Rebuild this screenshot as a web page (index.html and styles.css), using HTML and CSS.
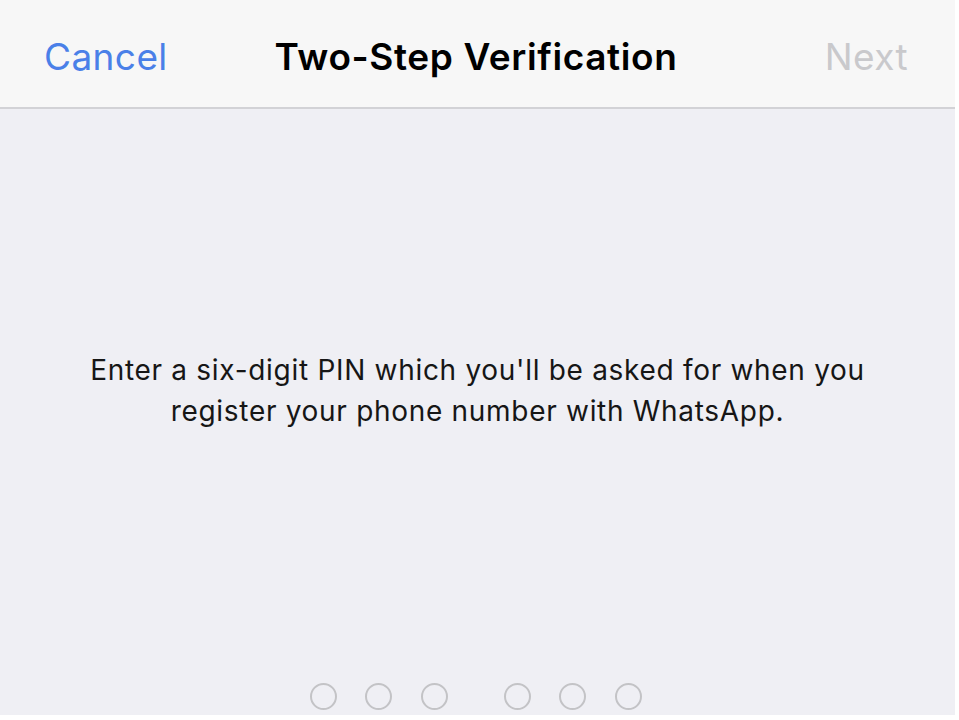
FILE: index.html
```html
<!DOCTYPE html>
<html lang="en">
<head>
  <meta charset="UTF-8" />
  <meta name="viewport" content="width=device-width, initial-scale=1.0" />
  <title>Two-Step Verification</title>
  <link rel="stylesheet" href="styles.css">
</head>
<body>
  <div class="screen">
    <header class="nav-bar">
      <button class="nav-btn cancel">Cancel</button>
      <h1 class="nav-title">Two-Step Verification</h1>
      <button class="nav-btn next" disabled>Next</button>
    </header>

    <main class="content">
      <p class="hint">
        Enter a six-digit PIN which you'll be asked for when you<br>
        register your phone number with WhatsApp.
      </p>

      <div class="pin-row">
        <div class="pin-group">
          <span class="pin-dot"></span>
          <span class="pin-dot"></span>
          <span class="pin-dot"></span>
        </div>
        <div class="pin-group">
          <span class="pin-dot"></span>
          <span class="pin-dot"></span>
          <span class="pin-dot"></span>
        </div>
      </div>
    </main>
  </div>
</body>
</html>
```

FILE: styles.css
```css
:root {
  --nav-bg: #f7f7f7;
  --page-bg: #efeff4;
  --hairline: #d2d2d6;
  --ios-blue: #4a80e8;
  --disabled: #c9c9cc;
  --dot: #c3c3c6;
}

* {
  box-sizing: border-box;
  margin: 0;
  padding: 0;
}

html, body {
  background: #ffffff;
  font-family: 'Inter', 'Liberation Sans', sans-serif;
  color: #000;
  width: 100%;
  height: 100%;
  overflow: hidden;
}

.screen {
  width: 955px;
  height: 715px;
  background: var(--page-bg);
  display: flex;
  flex-direction: column;
}

.nav-bar {
  height: 109px;
  background: var(--nav-bg);
  border-bottom: 2px solid var(--hairline);
  display: grid;
  grid-template-columns: 1fr auto 1fr;
  align-items: center;
  padding: 0 47px 0 44px;
}

.nav-btn {
  background: none;
  border: none;
  font-family: inherit;
  font-size: 37px;
  font-weight: 400;
  letter-spacing: 0.4px;
  margin-top: 6px;
}

.cancel {
  color: var(--ios-blue);
  justify-self: start;
}

.next {
  color: var(--disabled);
  justify-self: end;
}

.nav-title {
  font-size: 37px;
  font-weight: 600;
  letter-spacing: 0.6px;
  margin-top: 6px;
}

.content {
  flex: 1;
  display: flex;
  flex-direction: column;
  align-items: center;
}

.hint {
  margin-top: 241px;
  font-size: 28px;
  line-height: 41px;
  letter-spacing: 0.7px;
  text-align: center;
  color: #161616;
}

.pin-row {
  margin-top: auto;
  margin-bottom: 5px;
  margin-right: 4px;
  display: flex;
  gap: 56px;
}

.pin-group {
  display: flex;
  gap: 28.5px;
}

.pin-dot {
  width: 27px;
  height: 27px;
  border: 2px solid var(--dot);
  border-radius: 50%;
}
```
